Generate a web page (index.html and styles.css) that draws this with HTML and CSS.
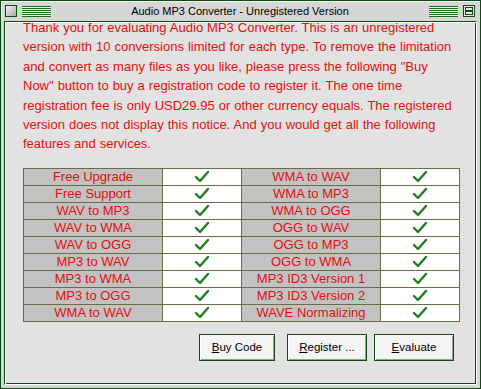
FILE: index.html
```html
<!DOCTYPE html>
<html>
<head>
<meta charset="utf-8">
<link rel="stylesheet" href="styles.css">
</head>
<body>
<div class="window">
  <div class="titlebar">
    <span class="sysbtn"></span>
    <span class="stripes"></span>
    <span class="title">Audio MP3 Converter - Unregistered Version</span>
    <span class="stripes"></span>
    <span class="rollbtn"><i></i><i></i></span>
  </div>
  <div class="client">
    <p class="notice">Thank you for evaluating Audio MP3 Converter. This is an unregistered<br>version with 10 conversions limited for each type. To remove the limitation<br>and convert as many files as you like, please press the following "Buy<br>Now" button to buy a registration code to register it. The one time<br>registration fee is only USD29.95 or other currency equals. The registered<br>version does not display this notice. And you would get all the following<br>features and services.</p>
    <table class="features">
      <tr><td class="name">Free Upgrade</td><td class="chk"><svg viewBox="0 0 16 14"><polyline points="2,7 6,11 14,2"/></svg></td><td class="name">WMA to WAV</td><td class="chk"><svg viewBox="0 0 16 14"><polyline points="2,7 6,11 14,2"/></svg></td></tr>
      <tr><td class="name">Free Support</td><td class="chk"><svg viewBox="0 0 16 14"><polyline points="2,7 6,11 14,2"/></svg></td><td class="name">WMA to MP3</td><td class="chk"><svg viewBox="0 0 16 14"><polyline points="2,7 6,11 14,2"/></svg></td></tr>
      <tr><td class="name">WAV to MP3</td><td class="chk"><svg viewBox="0 0 16 14"><polyline points="2,7 6,11 14,2"/></svg></td><td class="name">WMA to OGG</td><td class="chk"><svg viewBox="0 0 16 14"><polyline points="2,7 6,11 14,2"/></svg></td></tr>
      <tr><td class="name">WAV to WMA</td><td class="chk"><svg viewBox="0 0 16 14"><polyline points="2,7 6,11 14,2"/></svg></td><td class="name">OGG to WAV</td><td class="chk"><svg viewBox="0 0 16 14"><polyline points="2,7 6,11 14,2"/></svg></td></tr>
      <tr><td class="name">WAV to OGG</td><td class="chk"><svg viewBox="0 0 16 14"><polyline points="2,7 6,11 14,2"/></svg></td><td class="name">OGG to MP3</td><td class="chk"><svg viewBox="0 0 16 14"><polyline points="2,7 6,11 14,2"/></svg></td></tr>
      <tr><td class="name">MP3 to WAV</td><td class="chk"><svg viewBox="0 0 16 14"><polyline points="2,7 6,11 14,2"/></svg></td><td class="name">OGG to WMA</td><td class="chk"><svg viewBox="0 0 16 14"><polyline points="2,7 6,11 14,2"/></svg></td></tr>
      <tr><td class="name">MP3 to WMA</td><td class="chk"><svg viewBox="0 0 16 14"><polyline points="2,7 6,11 14,2"/></svg></td><td class="name">MP3 ID3 Version 1</td><td class="chk"><svg viewBox="0 0 16 14"><polyline points="2,7 6,11 14,2"/></svg></td></tr>
      <tr><td class="name">MP3 to OGG</td><td class="chk"><svg viewBox="0 0 16 14"><polyline points="2,7 6,11 14,2"/></svg></td><td class="name">MP3 ID3 Version 2</td><td class="chk"><svg viewBox="0 0 16 14"><polyline points="2,7 6,11 14,2"/></svg></td></tr>
      <tr><td class="name">WMA to WAV</td><td class="chk"><svg viewBox="0 0 16 14"><polyline points="2,7 6,11 14,2"/></svg></td><td class="name">WAVE Normalizing</td><td class="chk"><svg viewBox="0 0 16 14"><polyline points="2,7 6,11 14,2"/></svg></td></tr>
    </table>
    <div class="buttons">
      <button class="btn btn-buy"><u>B</u>uy Code</button>
      <button class="btn btn-reg"><u>R</u>egister ...</button>
      <button class="btn btn-eval"><u>E</u>valuate</button>
    </div>
  </div>
</div>
</body>
</html>
```
FILE: styles.css
```css
html, body {
  margin: 0;
  padding: 0;
  background: #d6d6d6;
}
.window {
  width: 481px;
  height: 389px;
  box-sizing: border-box;
  border: 1px solid #0e4a12;
  background: #d6d6d6;
  display: flex;
  flex-direction: column;
  font-family: "Liberation Sans", Arial, sans-serif;
}
.titlebar {
  height: 19px;
  display: flex;
  align-items: center;
  padding: 0 5px 0 4px;
  box-sizing: border-box;
  box-shadow: inset 1px 1px 0 #f2f2f2;
}
.sysbtn {
  width: 10px;
  height: 10px;
  border: 1px solid #0e4a12;
  background: linear-gradient(135deg, #f4f4f4 0%, #bcbcbc 70%, #a8a8a8 100%);
  margin-top: 1px;
}
.stripes {
  width: 29px;
  height: 11px;
  margin: 1px 0 0 5px;
  background: repeating-linear-gradient(to bottom, #1a6b1a 0, #1a6b1a 1px, #f4f4f4 1px, #f4f4f4 2px);
}
.title {
  flex: 1;
  text-align: center;
  font-size: 11px;
  color: #000;
  padding-top: 1px;
}
.title + .stripes { margin: 1px 0 0 0; }
.rollbtn {
  border: 1px solid #0e4a12;
  background: #e8e8e8;
  box-sizing: border-box;
  display: flex;
  flex-direction: column;
  justify-content: space-between;
  padding: 1px;
  margin-top: 1px;
  margin-left: 5px;
  width: 12px;
  height: 12px;
}
.rollbtn i {
  display: block;
  border: 1px solid #0e4a12;
  box-sizing: border-box;
  height: 4px;
}
.client {
  flex: 1;
  margin: 1px 3px 3px 3px;
  border-top: 1px solid #0e4a12;
  border-left: 1px solid #0e4a12;
  border-right: 1px solid #ffffff;
  border-bottom: 1px solid #ffffff;
  box-shadow: inset 1px 1px 0 #ffffff, inset -1px -1px 0 #0e4a12;
  background: #e2e2e2;
  padding: 0 8px 0 18px;
  display: flex;
  flex-direction: column;
}
.notice {
  margin: -4px 0 0 0;
  font-size: 13px;
  line-height: 19.4px;
  word-spacing: 0.4px;
  white-space: nowrap;
  color: #e01010;
}
.features {
  border-collapse: collapse;
  margin-top: 14px;
  width: 436px;
  table-layout: fixed;
}
.features td {
  border: 1px solid #6b6b45;
  height: 16px;
  padding: 0;
  text-align: center;
  font-size: 13px;
  line-height: 16px;
}
.features td.name {
  width: 138px;
  background: #c2c2c2;
  color: #e01010;
}
.features td.chk {
  width: 78px;
  background: #ffffff;
}
.chk svg {
  width: 16px;
  height: 14px;
  display: block;
  margin: 1px auto 0;
}
.chk polyline {
  fill: none;
  stroke: #1f7f1f;
  stroke-width: 2.4;
  stroke-linecap: round;
  stroke-linejoin: round;
}
.buttons {
  display: flex;
  justify-content: flex-end;
  margin-top: 12px;
  padding-right: 14px;
}
.btn {
  height: 27px;
  border: 1px solid #0e4a12;
  box-shadow: inset 1px 1px 0 #ffffff, inset -1px -1px 0 #9a9a9a;
  background: #f4f4f4;
  font-family: "Liberation Sans", Arial, sans-serif;
  font-size: 11.5px;
  color: #000;
  padding: 0;
}
.btn-buy { width: 76px; }
.btn-reg { width: 80px; margin-left: 12px; }
.btn-eval { width: 80px; margin-left: 7px; }
```
